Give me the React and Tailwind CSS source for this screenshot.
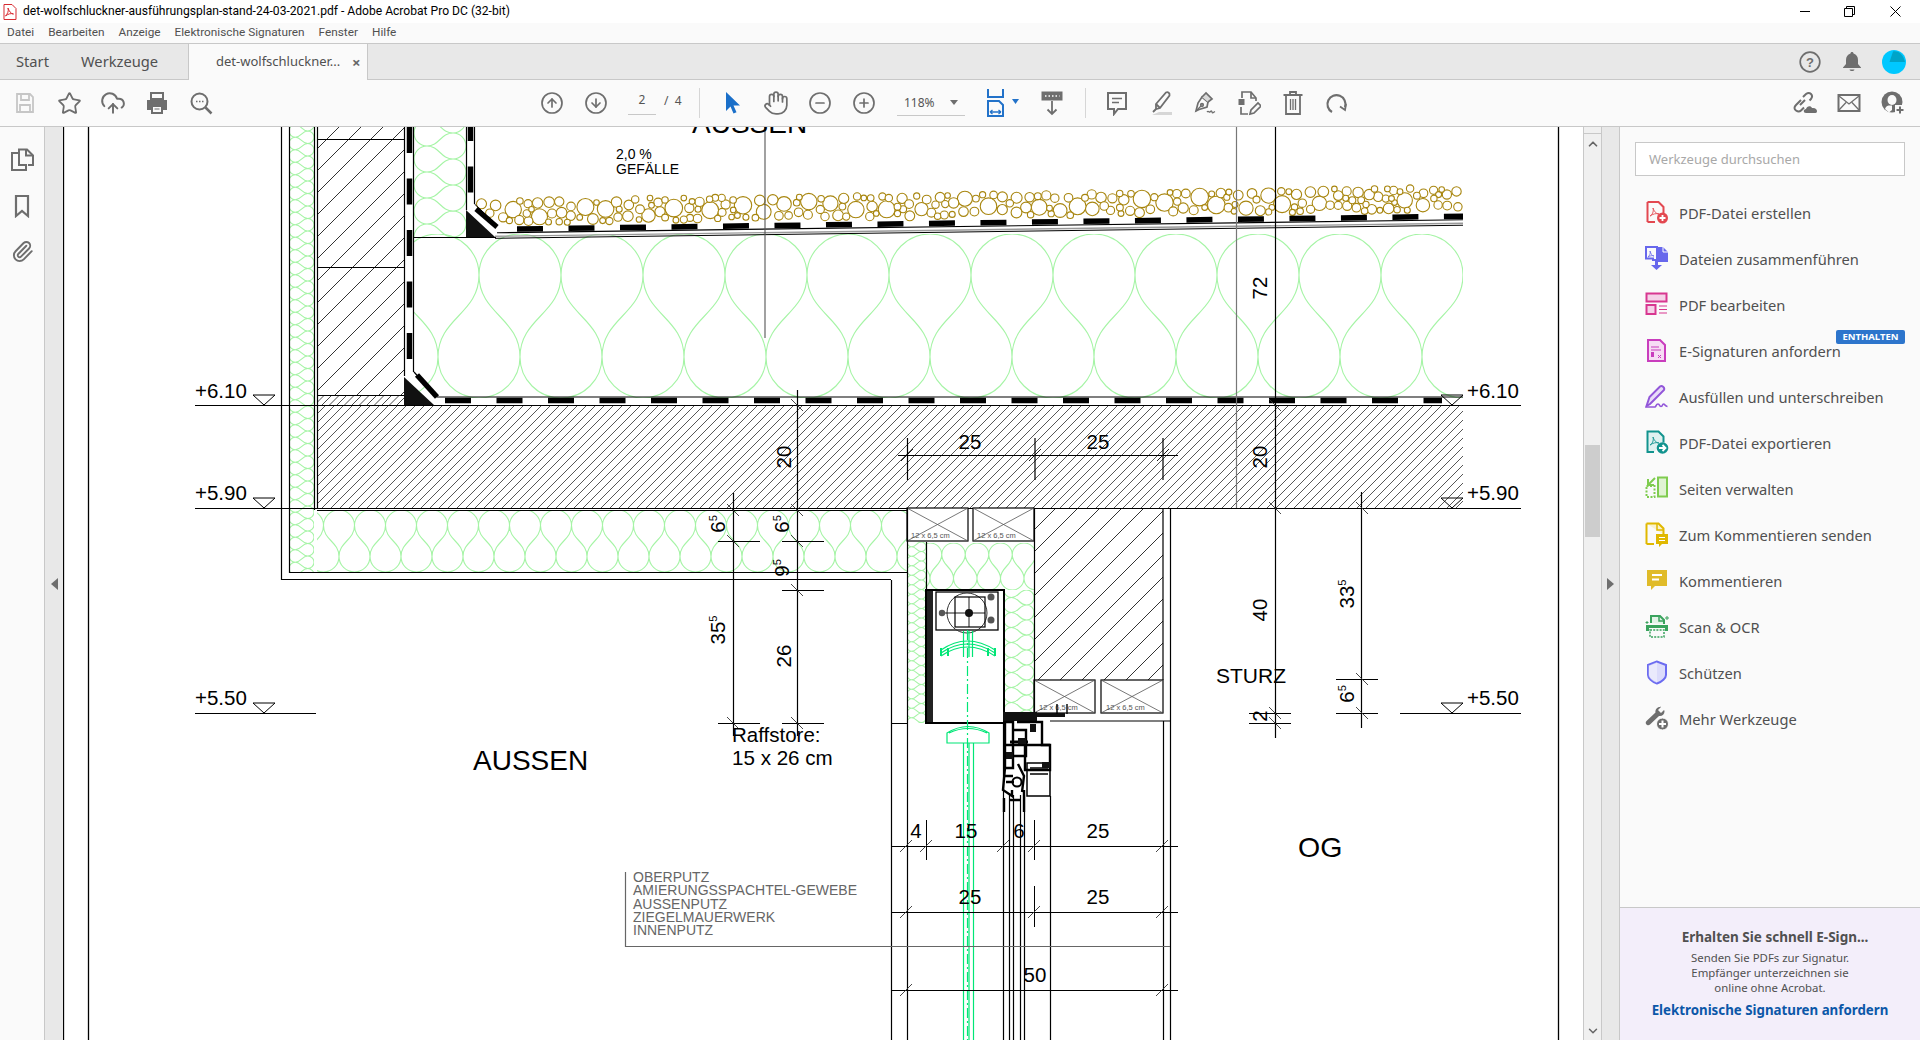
import {
  Star,
  CloudUpload,
  CircleArrowUp,
  CircleArrowDown,
  CircleMinus,
  CirclePlus,
  Hand,
  Paperclip,
  ChevronUp,
  ChevronDown,
} from "lucide-react";

// ---------- toolbar icons ----------
const G = "#6e6e6e";

const SaveIcon = () => (
  <svg width="24" height="24" viewBox="0 0 24 24" fill="none" stroke="#c6c6c6" strokeWidth="1.8">
    <path d="M4 3h13l3 3v15H4z" />
    <path d="M8 3v6h8V3" />
    <path d="M7 21v-7h10v7" />
  </svg>
);
const PrintIcon = () => (
  <svg width="24" height="24" viewBox="0 0 24 24">
    <path d="M6 2h12v6H6z" fill="none" stroke={G} strokeWidth="2" />
    <path d="M2 9h20v10h-4v-5H6v5H2z" fill={G} />
    <path d="M7 15h10v7H7z" fill="none" stroke={G} strokeWidth="2" />
    <path d="M9.500 18h5" stroke={G} />
  </svg>
);
const FindIcon = () => (
  <svg width="24" height="24" viewBox="0 0 24 24" fill="none" stroke={G} strokeWidth="2">
    <circle cx="10.500" cy="10.500" r="8" />
    <path d="M16.500 16.500l6 6" strokeWidth="2.500" />
    <path d="M7 10.500h1.500M10 10.500h1.500M13 10.500h1.500" strokeWidth="1.500" />
  </svg>
);
const PointerIcon = () => (
  <svg width="24" height="24" viewBox="0 0 24 24">
    <path d="M6 1v19l4.500-4.500 3 7 3-1.300-3-6.700H20z" fill="#1a6fc9" />
  </svg>
);
const FitIcon = () => (
  <svg width="24" height="30" viewBox="0 0 24 30" fill="none" stroke="#2272c9" strokeWidth="2">
    <path d="M4 1v8h15V1" />
    <path d="M4 28V13h11l4 4v11z" />
    <path d="M6 24h11M6 24l2.500-2M6 24l2.500 2M17 24l-2.500-2M17 24l-2.500 2" strokeWidth="1.300" />
  </svg>
);
const ScrollIcon = () => (
  <svg width="24" height="26" viewBox="0 0 24 26" fill="none" stroke={G}>
    <rect x="2" y="2" width="20" height="8" fill={G} />
    <path d="M5 6h1.500M8.500 6H10M12 6h1.500M15.500 6H17M19 6h.5" stroke="#fff" strokeWidth="1.500" />
    <path d="M12 11v13M7.500 19.500l4.500 4.500 4.500-4.500" strokeWidth="1.800" />
  </svg>
);
const CommentIcon = () => (
  <svg width="24" height="26" viewBox="0 0 24 26" fill="none" stroke={G} strokeWidth="2">
    <path d="M3 3h18v16h-8l-4 5v-5H3z" />
    <path d="M7 8.500h10M7 12.500h7" strokeWidth="1.500" />
  </svg>
);
const HighlightIcon = () => (
  <svg width="24" height="26" viewBox="0 0 24 26" fill="none" stroke={G} strokeWidth="1.800">
    <path d="M7 14L17 2.500c2-1 4 .8 3.500 3L11 18l-4 1z" />
    <path d="M7 14l4 4M4 22l3-3" />
    <path d="M10 22h13v3H3z" fill="#d6d6d6" stroke="none" />
  </svg>
);
const SignIcon = () => (
  <svg width="24" height="26" viewBox="0 0 24 26" fill="none" stroke={G} strokeWidth="1.700">
    <path d="M9 7l6 5-1 5-8 2.500L3 21l2-8z" />
    <path d="M9 7l4-4 6 6-4 3" fill="#d9d9d9" stroke={G} />
    <path d="M3 21l5-5" strokeWidth="1.200" />
    <circle cx="9" cy="15" r="1.300" />
    <path d="M14 22c1.500-2 2 1 3 0s1.500-2 2 0 2 0 3-.5" strokeWidth="1.300" />
  </svg>
);
const EditIcon = () => (
  <svg width="24" height="26" viewBox="0 0 24 26" fill="none" stroke={G} strokeWidth="1.700">
    <path d="M5 8V2h9l5 6v3" />
    <path d="M14 2v6h5" />
    <rect x="1.500" y="9" width="6" height="6" fill={G} stroke="none" />
    <path d="M4 17v7h7" />
    <path d="M13 24l1-4 7-7 3 3-7 7z" />
  </svg>
);
const TrashIcon = () => (
  <svg width="24" height="26" viewBox="0 0 24 26" fill="none" stroke={G} strokeWidth="1.800">
    <path d="M2.500 5h19M9 5V2h6v3" />
    <path d="M5 5v19h14V5" />
    <path d="M9.500 9v11M12 9v11M14.500 9v11" strokeWidth="1.300" />
  </svg>
);
const RotateIcon = () => (
  <svg width="24" height="24" viewBox="0 0 24 24" fill="none" stroke={G} strokeWidth="2.200">
    <path d="M7 21A9 9 0 1 1 20 16" />
    <path d="M15 15.500l5 3.500 1-6" strokeWidth="1.800" />
  </svg>
);
const LinkCloudIcon = () => (
  <svg width="26" height="24" viewBox="0 0 26 24" fill="none" stroke={G} strokeWidth="2">
    <path d="M9 9L4 14c-2 2-2 4 0 5.500s3.500 1.500 5 0l3-3" />
    <path d="M8 14l5-5M11 6l3-3c2-1.500 3.500-1.500 5 0s1.500 3 0 5l-1.500 1.500" />
    <path d="M14 22c-3 0-3-4 0-4 .5-3 5-4 6-1 3-.5 5 1 5 3 0 1-.5 2-1.500 2z" fill={G} stroke="none" />
  </svg>
);
const MailIcon = () => (
  <svg width="24" height="20" viewBox="0 0 24 20" fill="none" stroke={G} strokeWidth="2">
    <rect x="1.500" y="2" width="21" height="16" />
    <path d="M2 3l10 8 10-8M2 17l7-7.500M22 17l-7-7.500" strokeWidth="1.300" />
  </svg>
);
const UserAddIcon = () => (
  <svg width="24" height="24" viewBox="0 0 24 24">
    <circle cx="11" cy="11" r="10.500" fill={G} />
    <ellipse cx="11" cy="9" rx="4.500" ry="5" fill="#fafafa" />
    <path d="M4 18c1.500-4 4-3.500 7-3.500v4.500l-3 2.500z" fill="#fafafa" />
    <rect x="14" y="14" width="10" height="10" fill="#fafafa" />
    <path d="M19 15.500v7M15.500 19h7" stroke={G} strokeWidth="2" />
  </svg>
);
const HelpIcon = () => (
  <svg width="22" height="22" viewBox="0 0 22 22" fill="none">
    <circle cx="11" cy="11" r="9.800" stroke={G} strokeWidth="1.700" />
    <text x="11" y="15.500" textAnchor="middle" fontSize="13" fontWeight="700" fill={G} fontFamily="Liberation Sans, sans-serif">?</text>
  </svg>
);
const BellIcon = () => (
  <svg width="18" height="20" viewBox="0 0 18 20">
    <path d="M9 0c1 0 1.500.7 1.500 1.600C13.500 2.400 15 5 15 8v4l3 3.500V16H0v-.5L3 12V8c0-3 1.500-5.600 4.500-6.400C7.500.7 8 0 9 0z" fill={G} />
    <path d="M6.500 17.500h5C11 19.500 7 19.500 6.500 17.500z" fill={G} />
  </svg>
);
const Avatar = () => (
  <svg width="24" height="24" viewBox="0 0 24 24">
    <circle cx="12" cy="12" r="12" fill="#00c8ff" />
    <path d="M11 1.500C15 .5 21 3 23 12H7.500z" fill="#00a4c8" />
  </svg>
);

// ---------- tool panel icons ----------
const red = "#e34850";
const PanelIcons = {
  create: (
    <>
      <path d="M2.500 2h11l5 5v6M10 22H2.500z" fill="none" stroke={red} strokeWidth="2" />
      <path d="M2.500 2v20" stroke={red} strokeWidth="2" />
      <path d="M8 8c1 4-1 7-3 8 3-2 6-3 9-2-3 0-5-3-6-6z" fill="none" stroke={red} strokeWidth=".9" />
      <circle cx="17.500" cy="18" r="5.500" fill={red} />
      <path d="M17.500 15v6M14.500 18h6" stroke="#fff" strokeWidth="1.800" />
    </>
  ),
  merge: (
    <>
      <path d="M1 1h11v13H8v-1.500H1z" fill="none" stroke="#6767ec" strokeWidth="2" />
      <path d="M13 1h5l5 5v10H13z" fill="#6767ec" />
      <path d="M18 1v5h5" fill="none" stroke="#fff" />
      <path d="M5 5c1 3-1 5-2 6 2-1 4-2 6-1-2 0-3-2-4-5z" fill="none" stroke="#6767ec" strokeWidth=".8" />
      <path d="M13 15v4h4l-5.500 5L6 19h4v-4z" fill="#6767ec" />
    </>
  ),
  edit: (
    <>
      <rect x="1.500" y="1.500" width="20" height="8" fill="#f5d2e8" stroke="#d83790" strokeWidth="2" />
      <rect x="1.500" y="13" width="9" height="9" fill="#f5d2e8" stroke="#d83790" strokeWidth="2" />
      <path d="M14 14h8M14 17.500h8M14 21h8" stroke="#d83790" strokeWidth="1.200" />
    </>
  ),
  sign: (
    <>
      <path d="M3 2h12l5 5v16H3z" fill="#f6dcf4" stroke="#c93dbd" strokeWidth="2" />
      <path d="M6 9h8M6 12h10" stroke="#c93dbd" />
      <rect x="6" y="14" width="3" height="5" fill="#c93dbd" />
      <path d="M13 17l3 3M16 17l-3 3" stroke="#c93dbd" />
    </>
  ),
  fill: (
    <>
      <path d="M1.500 22l3-9L15 2.500c2-1.500 5 1 4 3.500L8 17l-3 3z" fill="#e8dcf8" stroke="#9256d9" strokeWidth="2" />
      <path d="M1 23h9c1 0 1-3 3-3s1 2.500 3 2.500 1-2.500 2.500-2.500 1.500 2.500 4 2.500" fill="none" stroke="#9256d9" strokeWidth="1.700" />
    </>
  ),
  export: (
    <>
      <path d="M9 22H2.500V1.500h11l5 5v6" fill="#e0f1f0" stroke="#12938e" strokeWidth="2" />
      <path d="M8 7c1 4-1 7-3 8 3-2 6-3 9-2-3 0-5-3-6-6z" fill="none" stroke="#12938e" strokeWidth=".9" />
      <circle cx="17.500" cy="18" r="5.800" fill="#12938e" />
      <path d="M14 18h6M17.500 15l3 3-3 3" fill="none" stroke="#fff" strokeWidth="1.800" />
    </>
  ),
  pages: (
    <>
      <rect x="13" y="1.500" width="9" height="19" fill="#e0f3d3" stroke="#7fcc4f" strokeWidth="2" />
      <path d="M1.500 10h8v11h-8z" fill="none" stroke="#7fcc4f" strokeWidth="2" strokeDasharray="2 1.500" />
      <path d="M10 2L3.500 8.500M3 3v6h6" fill="none" stroke="#7fcc4f" strokeWidth="2" />
    </>
  ),
  send: (
    <>
      <path d="M1.500 1.500h12l5 5v6M9 22H1.500z" fill="#faf2cc" stroke="#e0b800" strokeWidth="2" />
      <path d="M1.500 1.500v20.500" stroke="#e0b800" strokeWidth="2" />
      <path d="M12 2v6h6" fill="none" stroke="#e0b800" strokeWidth="1.500" />
      <path d="M11 12h12v10h-6l-3 3v-3h-3z" fill="#e0b800" />
      <path d="M14 15.500h6M14 18.500h6" stroke="#fff" />
    </>
  ),
  comment: (
    <>
      <path d="M2 2h20v16H10l-4 4v-4H2z" fill="#e0bb29" />
      <path d="M7 7h10M7 11.500h7" stroke="#fff" strokeWidth="2" />
    </>
  ),
  scan: (
    <>
      <path d="M6 9V2h9l4 4v4" fill="#e2f3e7" stroke="#3aa35d" strokeWidth="2" />
      <path d="M14 2v5h5" fill="none" stroke="#3aa35d" strokeWidth="1.500" />
      <path d="M1 11h22v6h-3v-3H4v3H1z" fill="#3aa35d" />
      <rect x="5" y="16" width="14" height="7" fill="none" stroke="#3aa35d" strokeWidth="1.500" strokeDasharray="2 1.200" />
      <path d="M22 2v4M20 4h4M2 7v3M.5 8.500h3" stroke="#3aa35d" strokeWidth="1" />
    </>
  ),
  shield: (
    <>
      <path d="M12 1.500L3 5v10c0 3 4 7 9 8.500 5-1.500 9-5.500 9-8.500V5z" fill="#dcdcfb" stroke="#6b6bf0" strokeWidth="2" />
      <path d="M3.500 5.500L12 2v21C7 21.500 4 18 3.500 15z" fill="#fff" opacity=".4" />
    </>
  ),
  more: (
    <>
      <path d="M15 1c-3 0-5 2.500-4.500 5.500L1.500 15c-1.500 1.500-.5 3 0 3.500s2 1.500 3.500 0L14 10c3 .5 5.500-1.500 5.500-4.500 0-.5 0-1-.5-1.500l-3 3-3-3 3-3c-.5-.3-.5 0-1-.5z" fill={G} />
      <circle cx="17.500" cy="18" r="6" fill={G} stroke="#fafafa" />
      <path d="M17.500 14.500v7M14 18h7" stroke="#fff" strokeWidth="2" />
    </>
  ),
};

const tools = [
  ["create", "PDF-Datei erstellen"],
  ["merge", "Dateien zusammenführen"],
  ["edit", "PDF bearbeiten"],
  ["sign", "E-Signaturen anfordern", true],
  ["fill", "Ausfüllen und unterschreiben"],
  ["export", "PDF-Datei exportieren"],
  ["pages", "Seiten verwalten"],
  ["send", "Zum Kommentieren senden"],
  ["comment", "Kommentieren"],
  ["scan", "Scan & OCR"],
  ["shield", "Schützen"],
  ["more", "Mehr Werkzeuge"],
];

// ---------- drawing helpers ----------
const GREEN = "#a6f4a6";

function wavePath(len, thick, phase) {
  const r = thick / 4;
  const yt = r;
  const yb = thick - r;
  const c = r * 0.95;
  let d = "";
  for (let xb = phase - 4 * r; xb < len + 4 * r; xb += 2 * r) {
    d += `M${xb} ${yb}A${r} ${r} 0 0 0 ${xb + 2 * r} ${yb}`;
    d += `M${xb + r} ${yt}A${r} ${r} 0 0 1 ${xb + 3 * r} ${yt}`;
    d += `M${xb} ${yb}C${xb} ${yb - c} ${xb + r} ${yt + c} ${xb + r} ${yt}`;
    d += `M${xb} ${yb}C${xb} ${yb - c} ${xb - r} ${yt + c} ${xb - r} ${yt}`;
  }
  return d;
}

function Insulation({ id, x, y, w, h, vertical, phase = 0, width = 1.100 }) {
  const len = vertical ? h : w;
  const thick = vertical ? w : h;
  const tr = vertical ? `matrix(0 1 1 0 ${x} ${y})` : `translate(${x} ${y})`;
  return (
    <g clipPath={`url(#${id})`}>
      <clipPath id={id}>
        <rect x={x} y={y} width={w} height={h} />
      </clipPath>
      <path d={wavePath(len, thick, phase)} transform={tr} fill="none" stroke={GREEN} strokeWidth={width} />
    </g>
  );
}

function Hatch({ id, x, y, w, h, step, color = "#555", width = 0.9 }) {
  const lines = [];
  for (let i = -h; i < w; i += step) {
    lines.push(`M${x + i} ${y + h}L${x + i + h} ${y}`);
  }
  return (
    <g clipPath={`url(#${id})`}>
      <clipPath id={id}>
        <rect x={x} y={y} width={w} height={h} />
      </clipPath>
      <path d={lines.join("")} stroke={color} strokeWidth={width} fill="none" />
    </g>
  );
}

const L = ({ d, c = "#000", w = 1.2, ...rest }) => <path d={d} stroke={c} strokeWidth={w} fill="none" {...rest} />;

const T = ({ x, y, s = 20.500, rot, c = "#000", a = "start", children, ...rest }) => (
  <text
    x={x}
    y={y}
    fontSize={s}
    fill={c}
    textAnchor={a}
    transform={rot ? `rotate(-90 ${x} ${y})` : undefined}
    {...rest}
  >
    {children}
  </text>
);

// rotated dimension with small superscript 5
const Dim5 = ({ x, y, v }) => (
  <T x={x} y={y} rot a="middle">
    {v}
    <tspan fontSize="11" dy="-8">5</tspan>
  </T>
);

const tickH = (x, y) => `M${x - 6} ${y + 6}L${x + 6} ${y - 6}`;
const tickV = (x, y) => `M${x - 6} ${y - 6}L${x + 6} ${y + 6}`;

const slopeY = (x) => 229 - (x - 517) * 0.0135;

// loose packing of gravel stones along the slope, no stone sits on top of another
function gravelCircles() {
  let seed = 4711;
  const rnd = () => {
    seed = (seed * 16807) % 2147483647;
    return seed / 2147483647;
  };
  const stones = [];
  const tryPlace = (rMin, rMax, tries) => {
    for (let i = 0; i < tries; i++) {
      const x = 477 + rnd() * 981;
      const r = rMin + rnd() * (rMax - rMin);
      // left end of the bed follows the diagonal corner of the membrane
      const bottom = Math.min(slopeY(x) - 3, 207 + (x - 477) * 0.85);
      const band = bottom - 196 + (x - 477) * 0.013 < 29 ? Math.max(bottom - 196, 8) : 29;
      if (band < 2 * r) continue;
      const y = bottom - r - rnd() * (band - 2 * r);
      const clash = stones.some((s) => Math.hypot(s.x - x, s.y - y) < s.r + r - 0.800);
      if (!clash) stones.push({ x, y, r });
    }
  };
  tryPlace(6.500, 9, 60);
  tryPlace(4, 5.500, 1100);
  tryPlace(2.800, 3.800, 3000);
  return stones.map((s, i) => (
    <circle key={i} cx={s.x.toFixed(1)} cy={s.y.toFixed(1)} r={s.r.toFixed(1)} />
  ));
}

function Level({ x, y, tx, dy = 8, label }) {
  return (
    <g>
      <T x={tx} y={y - dy}>{label}</T>
      <path d={`M${x} ${y - 10}h22l-11 10z`} fill="none" stroke="#000" strokeWidth="1" />
    </g>
  );
}

function SmallBox({ x, y, w, h, tx, ty }) {
  return (
    <g>
      <rect x={x} y={y} width={w} height={h} fill="#fff" stroke="#000" strokeWidth="1.200" />
      <L d={`M${x} ${y}L${x + w} ${y + h}M${x + w} ${y}L${x} ${y + h}`} c="#555" w=".8" />
      <T x={tx} y={ty} s={7.500} c="#555">12 x 6,5 cm</T>
    </g>
  );
}

function Drawing() {
  const dash = "26 25.500";
  return (
    <svg
      width="1520"
      height="913"
      viewBox="63 127 1520 913"
      className="block bg-white font-['Liberation_Sans',sans-serif]"
    >
      {/* page borders */}
      <L d="M63.500 127V1040M88.500 127V1040M1558.500 127V1040" w="1.300" />

      {/* outer insulation strips */}
      <Insulation id="c1" x={289} y={127} w={25} h={445} vertical phase={4} />
      <Insulation id="c2" x={414} y={127} w={52} h={110} vertical phase={6} />
      <Insulation id="c3" x={317} y={510} w={590} h={62} phase={-9} />
      <Insulation id="c4" x={907} y={542} w={19} h={181} vertical phase={0} />
      <Insulation id="c5" x={927} y={543} w={107} h={47} phase={3} />
      <Insulation id="c6" x={1004} y={590} w={30} h={122} vertical phase={0} />

      {/* main roof insulation */}
      <g clipPath="url(#roof)">
        <clipPath id="roof">
          <rect x={414} y={234} width={1049} height={164} />
        </clipPath>
        <path d={wavePath(1200, 164, 0)} transform="translate(356 234)" fill="none" stroke={GREEN} strokeWidth="1.100" />
      </g>

      {/* brick walls */}
      <Hatch id="h1" x={317} y={127} w={88} h={268} step={22} color="#333" width="1" />
      <Hatch id="h2" x={317} y={395} w={88} h={10} step={7.500} color="#333" />
      <Hatch id="h3" x={1034} y={508} w={129} h={172} step={22} color="#333" width="1" />

      {/* concrete slab */}
      <Hatch id="h4" x={317} y={405} w={1146} h={103} step={9} color="#444" width=".9" />

      {/* wall outlines */}
      <L d="M281.500 127V579.500H891M289.500 127V572.500H907M314.500 127V510M317.500 127V508" />
      <L d="M317 139.500H405M317 267.500H405M317 395.500H405" />
      <L d="M195 405.500H1521M195 508.500H1521M195 713.500H316M1400 713.500H1521" />
      <L d="M317 510.500H907" />

      {/* membrane vertical */}
      <L d="M404.500 127V376M413.500 127V372" />
      <L d="M409.500 127V376" w="5.500" strokeDasharray={dash} />
      <path d="M404 377V405H434z" fill="#111" />
      <L d="M414 372L437 397H1463" />
      <L d="M417 375L437 397" w="5.500" />
      <L d="M437 400.500H1442" w="5.500" strokeDasharray={dash} strokeDashoffset="-8" />

      {/* upper parapet membrane */}
      <L d="M466.500 127V210M474.500 127V204" />
      <L d="M470.500 127V208" w="5.500" strokeDasharray={dash} strokeDashoffset="12" />
      <path d="M466 210V237H495z" fill="#111" />
      <L d="M413 237.500H496" />

      {/* gravel */}
      <g fill="#fff" stroke="#a8860f" strokeWidth="1.100">{gravelCircles()}</g>

      <L d="M476 209L497 227" w="5" />
      <L d="M474.500 204L497 225" w="1" />

      {/* sloped membrane */}
      <L d={`M517 ${slopeY(517)}L1463 ${slopeY(1463)}`} w="5.500" strokeDasharray={dash} />
      <L d={`M497 ${slopeY(497) + 3.500}L1463 ${slopeY(1463) + 3.500}`} w="1.200" />
      <L d={`M495 ${slopeY(495) + 7}L1463 ${slopeY(1463) + 7}`} c="#999" w="1.400" />
      <L d={`M495 ${slopeY(495) + 9}L1463 ${slopeY(1463) + 9}`} w="1" />

      {/* soffit boxes */}
      <SmallBox x={907} y={508} w={61} h={33} tx={911} ty={538} />
      <SmallBox x={973} y={508} w={61} h={33} tx={977} ty={538} />
      <SmallBox x={1034} y={680} w={61} h={33} tx={1039} ty={710} />
      <SmallBox x={1101} y={680} w={62} h={33} tx={1106} ty={710} />
      <L d="M926.500 542V590M1034.500 508V712M1163 508V680M1170.500 508V1040" />
      <L d="M907.500 508V1040M891.500 580V1040" />
      <L d="M1050 721H1170M1163.500 721V1040" />

      {/* blind box */}
      <rect x="926" y="590" width="7" height="133" fill="#222" />
      <rect x="926" y="590" width="78" height="133" fill="none" stroke="#000" strokeWidth="2" />
      <rect x="936" y="592" width="62" height="38" fill="#fff" stroke="#000" strokeWidth="1.300" />
      <circle cx="967" cy="613" r="20" fill="none" stroke="#333" />
      <rect x="955" y="597" width="30" height="30" fill="none" stroke="#000" strokeWidth="1.200" />
      <L d="M941 613H985M969 597V627" w=".9" />
      <circle cx="969" cy="613" r="4" fill="#111" />
      <circle cx="942" cy="613" r="3.200" fill="#555" />
      <circle cx="991" cy="597" r="3.500" fill="#555" />
      <circle cx="991" cy="620" r="3.500" fill="#555" />
      <g stroke="#00e676" fill="none" strokeWidth="1.200">
        <path d="M963.500 631V657M969 631V657M972.500 631V657" />
        <path d="M941 650Q967 632 995 650M941 653Q967 635 995 653M941 656Q967 638 995 656" />
        <path d="M941 648v8M948 648v8M988 648v8M995 648v8" strokeWidth="2" />
        <path d="M947 743V733Q968 720 989 733V743zM949 733Q968 724 987 733" />
        <path d="M963.500 743V1040M969 743V1040M973.500 743V1040" />
        <path d="M967.500 630V1040" strokeDasharray="10 3 2 3" />
      </g>

      {/* window profile */}
      <rect x="1003" y="712" width="34" height="9" fill="#111" />
      <rect x="1037" y="713" width="28" height="4" fill="#111" />
      <L d="M1057 704V714M1067 704V714" w="1.400" />
      <g fill="none" stroke="#000" strokeWidth="2.400">
        <path d="M1005 722V768H1013V722zM1013 730H1026V756H1013z" />
        <path d="M1017 722H1042V745H1050V770H1025V745" />
        <path d="M1005 745H1050M1005 768L1003 790L1012 796V790M1018 764L1024 776L1022 792" />
        <path d="M1027 763H1050V796H1027z" strokeWidth="1.500" />
        <path d="M1010 742H1028" strokeWidth="3" />
        <path d="M1030 768H1048M1030 774H1048" strokeWidth="1.500" />
        <path d="M1004 776H1013M1006 782H1014M1004 798V812M1024 790V812M1010 800H1020" />
      </g>
      <rect x="1030" y="724" width="6" height="8" fill="#111" />
      <rect x="1006" y="752" width="7" height="7" fill="#111" />
      <rect x="1018" y="738" width="8" height="6" fill="#111" />
      <rect x="1042" y="762" width="8" height="6" fill="#111" />
      <circle cx="1017" cy="782" r="4.500" fill="none" stroke="#000" strokeWidth="2" />
      <L d="M1003.500 722V1040M1009.500 795V1040M1013.500 795V1040M1020.500 795V1040M1024.500 795V1040M1050.500 796V1040" w="1.200" />

      {/* dims: horizontal */}
      <L d="M898 455.500H1178M907.500 438V480M1035 438V480M1163 438V480" />
      <L d={tickH(907, 455) + tickH(1035, 455) + tickH(1163, 455)} w=".9" />
      <L d="M891 846.500H1178M891 912.500H1178M891 990.500H1178" />
      <L d="M926.500 820V860M1034.500 820V860M1034.500 886V927" w="1" />
      <L d={[tickH(906, 846), tickH(926, 846), tickH(1003, 846), tickH(1034, 846), tickH(1162, 846), tickH(906, 912), tickH(1034, 912), tickH(1162, 912), tickH(906, 990), tickH(1162, 990)].join("")} c="#333" w=".9" />
      <L d="M625.500 872V946.500H1170" c="#666" w="1.200" />

      {/* dims: vertical */}
      <L d="M733.500 493V736M797.500 390V736" />
      <L d="M718 541.500H760M782 541.500H824M782 590.500H824M718 723.500H760M782 723.500H824M891 723.500H907" />
      <L d={[tickV(733, 510), tickV(797, 405), tickV(797, 510), tickV(733, 541), tickV(797, 541), tickV(797, 590), tickV(733, 723), tickV(797, 723)].join("")} c="#333" w=".9" />

      <L d="M1275.500 127V738" c="#000" />
      <L d="M1236.500 127V508" c="#777" />
      <L d="M1361.500 492V728M1336 679.500H1378M1336 713.500H1378M1249 713.500H1291M1249 723.500H1291" />
      <L d={[tickV(1275, 405), tickV(1275, 508), tickV(1275, 713), tickV(1275, 723), tickV(1362, 508), tickV(1362, 679), tickV(1362, 713)].join("")} c="#333" w=".9" />
      <L d="M765 127V338" c="#555" w="1.100" />

      {/* labels */}
      <T x={692} y={133} s={28}>AUSSEN</T>
      <T x={473} y={770} s={28}>AUSSEN</T>
      <T x={616} y={159} s={14}>2,0 %</T>
      <T x={616} y={174} s={14}>GEFÄLLE</T>
      <T x={732} y={742} s={20.500}>Raffstore:</T>
      <T x={732} y={765} s={20.600}>15 x 26 cm</T>
      <T x={1216} y={683} s={21}>STURZ</T>
      <T x={1298} y={857} s={28.500}>OG</T>

      <T x={195} y={398}>+6.10</T>
      <T x={195} y={500}>+5.90</T>
      <T x={195} y={705}>+5.50</T>
      <path d="M253 395h22l-11 10zM253 498h22l-11 10zM253 703h22l-11 10z" fill="none" stroke="#000" />
      <Level x={1441} y={405} tx={1467} dy={7} label="+6.10" />
      <Level x={1441} y={508} tx={1467} label="+5.90" />
      <Level x={1441} y={713} tx={1467} label="+5.50" />

      <T x={970} y={449} a="middle">25</T>
      <T x={1098} y={449} a="middle">25</T>
      <T x={916} y={838} a="middle">4</T>
      <T x={966} y={838} a="middle">15</T>
      <T x={1019} y={838} a="middle">6</T>
      <T x={1098} y={838} a="middle">25</T>
      <T x={970} y={904} a="middle">25</T>
      <T x={1098} y={904} a="middle">25</T>
      <T x={1035} y={982} a="middle">50</T>

      <T x={791} y={457} rot a="middle">20</T>
      <T x={1267} y={457} rot a="middle">20</T>
      <T x={1267} y={288} rot a="middle">72</T>
      <T x={1267} y={610} rot a="middle">40</T>
      <T x={1267} y={716} rot a="middle">2</T>
      <T x={791} y={656} rot a="middle">26</T>
      <Dim5 x={725} y={524} v="6" />
      <Dim5 x={789} y={524} v="6" />
      <Dim5 x={789} y={568} v="9" />
      <Dim5 x={725} y={630} v="35" />
      <Dim5 x={1354} y={594} v="33" />
      <Dim5 x={1354} y={694} v="6" />

      <g fontSize="14" fill="#666">
        <text x="633" y="882">OBERPUTZ</text>
        <text x="633" y="895" textLength="224">AMIERUNGSSPACHTEL-GEWEBE</text>
        <text x="633" y="909">AUSSENPUTZ</text>
        <text x="633" y="922">ZIEGELMAUERWERK</text>
        <text x="633" y="935">INNENPUTZ</text>
      </g>
    </svg>
  );
}

const Btn = ({ children, className = "" }) => (
  <div className={`w-[44px] h-[46px] shrink-0 flex items-center justify-center ${className}`}>{children}</div>
);

export default function App() {
  return (
    <div className="w-[1920px] h-[1040px] flex flex-col overflow-hidden bg-white font-['Noto_Sans',sans-serif] text-[#4b4b4b]">
      {/* title bar */}
      <div className="h-[23px] shrink-0 bg-white flex items-center text-[12.100px] text-black">
        <svg width="14" height="16" viewBox="0 0 14 16" className="ml-[3px] mr-[6px]">
          <path d="M1 .500h8l4 4v11H1z" fill="#fff" stroke="#d7282f" />
          <path d="M5 4c1 3-.5 6-2.500 8 2.500-2 5.500-3 8-2-2.500 0-4.500-3-5.500-6z" fill="none" stroke="#d7282f" />
        </svg>
        <span className="w-[1760px] truncate font-['Roboto',sans-serif]">det-wolfschluckner-ausführungsplan-stand-24-03-2021.pdf - Adobe Acrobat Pro DC (32-bit)</span>
        <div className="ml-auto flex items-center">
          <div className="w-[45px] h-[23px] flex items-center justify-center">
            <div className="w-[10px] h-px bg-black" />
          </div>
          <div className="w-[45px] h-[23px] flex items-center justify-center">
            <svg width="11" height="11" viewBox="0 0 11 11" fill="none" stroke="#000"><path d="M.500 2.500h8v8h-8zM2.500 2.500v-2h8v8h-2" /></svg>
          </div>
          <div className="w-[48px] h-[23px] flex items-center justify-center pr-[2px]">
            <svg width="11" height="11" viewBox="0 0 11 11" stroke="#000"><path d="M.500.500l10 10M10.500.500l-10 10" /></svg>
          </div>
        </div>
      </div>

      {/* menu bar */}
      <div className="h-[20px] shrink-0 bg-[#fafafa] flex items-center gap-[14px] pl-[7px] text-[11.800px] text-[#505050] font-['Roboto',sans-serif]">
        <span>Datei</span>
        <span>Bearbeiten</span>
        <span>Anzeige</span>
        <span>Elektronische Signaturen</span>
        <span>Fenster</span>
        <span>Hilfe</span>
      </div>

      {/* tab bar */}
      <div className="h-[37px] shrink-0 bg-[#e8e8e8] border-y border-[#c8c8c8] flex items-stretch text-[#505050]">
        <span className="w-[65px] ml-[16px] self-center text-[14.700px]">Start</span>
        <span className="w-[107px] self-center text-[14.700px]">Werkzeuge</span>
        <div className="w-[180px] -mb-px bg-[#fafafa] border-x border-[#c8c8c8] flex items-center pl-[27px] text-[13px]">
          <span className="w-[131px] whitespace-nowrap">det-wolfschluckner...</span>
          <span className="ml-[5px] text-[15px] font-bold text-[#666] leading-none">×</span>
        </div>
        <div className="ml-auto flex items-center">
          <div className="w-[44px] flex justify-center ml-[1px]"><HelpIcon /></div>
          <div className="w-[40px] flex justify-center"><BellIcon /></div>
          <div className="w-[44px] flex justify-center mr-[4px]"><Avatar /></div>
        </div>
      </div>

      {/* toolbar */}
      <div className="h-[47px] shrink-0 bg-[#fafafa] border-b border-[#c8c8c8] flex items-center pl-[3px]">
        <Btn><SaveIcon /></Btn>
        <Btn><Star size={25} color={G} strokeWidth={1.700} /></Btn>
        <Btn><CloudUpload size={26} color={G} strokeWidth={1.800} /></Btn>
        <Btn><PrintIcon /></Btn>
        <Btn><FindIcon /></Btn>

        <Btn className="ml-[307px]"><CircleArrowUp size={24} color={G} strokeWidth={1.700} /></Btn>
        <Btn><CircleArrowDown size={24} color={G} strokeWidth={1.700} /></Btn>
        <div className="w-[81px] shrink-0 flex items-center text-[12px] text-[#555] pl-[10px]">
          <span className="w-[28px] pb-[5px] border-b border-[#c8c8c8] text-center">2</span>
          <span className="ml-[8px] pb-[5px]">/&nbsp;&nbsp;4</span>
        </div>
        <div className="w-px h-[30px] bg-[#d6d6d6] shrink-0" />
        <Btn className="ml-[10px]"><PointerIcon /></Btn>
        <Btn><Hand size={26} color={G} strokeWidth={1.600} /></Btn>
        <Btn><CircleMinus size={24} color={G} strokeWidth={1.700} /></Btn>
        <Btn><CirclePlus size={24} color={G} strokeWidth={1.700} /></Btn>
        <div className="w-[85px] h-[46px] shrink-0 flex items-center">
          <div className="ml-[11px] w-[68px] h-[26px] border-b border-[#c8c8c8] flex items-center pl-[7px] text-[12px] text-[#555]">
            118%
            <svg width="8" height="6" viewBox="0 0 8 6" className="ml-[15px]"><path d="M0 0h8L4 5z" fill={G} /></svg>
          </div>
        </div>
        <div className="w-[52px] h-[46px] shrink-0 flex items-center pl-[13px]">
          <FitIcon />
          <svg width="7" height="5" viewBox="0 0 7 5" className="ml-[4px] mb-[3px] shrink-0"><path d="M0 0h7L3.500 5z" fill="#2272c9" /></svg>
        </div>
        <Btn className="ml-[7px]"><ScrollIcon /></Btn>
        <div className="w-px h-[30px] bg-[#d6d6d6] shrink-0 ml-[11px]" />
        <Btn className="ml-[9px]"><CommentIcon /></Btn>
        <Btn><HighlightIcon /></Btn>
        <Btn><SignIcon /></Btn>
        <Btn><EditIcon /></Btn>
        <Btn><TrashIcon /></Btn>
        <Btn><RotateIcon /></Btn>

        <div className="ml-auto flex pr-[5px]">
          <Btn><LinkCloudIcon /></Btn>
          <Btn><MailIcon /></Btn>
          <Btn><UserAddIcon /></Btn>
        </div>
      </div>

      {/* main area */}
      <div className="flex-1 min-h-0 flex">
        <div className="w-[45px] shrink-0 bg-[#fafafa] border-r border-[#c8c8c8] flex flex-col items-center pt-[21px] gap-[22px]">
          <svg width="24" height="24" viewBox="0 0 24 24" fill="none" stroke={G} strokeWidth="2">
            <path d="M9 5V1.500h8l6 6V17h-5" />
            <path d="M16 1.500v6h6" />
            <path d="M9 5H2v17h14v-5H9z" />
          </svg>
          <svg width="18" height="24" viewBox="0 0 18 24" fill="none" stroke={G} strokeWidth="2.200">
            <path d="M3 2h12v20l-6-5-6 5z" />
          </svg>
          <Paperclip size={23} color={G} strokeWidth={2} />
        </div>
        <div className="w-[18px] shrink-0 bg-[#e8e8e8] flex items-center justify-center">
          <svg width="7" height="12" viewBox="0 0 7 12"><path d="M7 0v12L0 6z" fill={G} /></svg>
        </div>

        <Drawing />

        {/* scrollbar */}
        <div className="w-[19px] shrink-0 bg-[#f0f0f0] border-x border-[#c8c8c8] flex flex-col items-center">
          <div className="w-full h-[7px] border-b border-[#c8c8c8]" />
          <ChevronUp size={14} color="#666" strokeWidth={3} className="mt-[3px]" />
          <div className="w-[15px] h-[92px] bg-[#cdcdcd] mt-[294px]" />
          <ChevronDown size={14} color="#666" strokeWidth={2.500} className="mt-auto mb-[2px]" />
        </div>
        <div className="w-[18px] shrink-0 bg-[#e8e8e8] border-r border-[#c8c8c8] flex items-center justify-center">
          <svg width="7" height="12" viewBox="0 0 7 12"><path d="M0 0v12l7-6z" fill={G} /></svg>
        </div>

        {/* tools panel */}
        <div className="w-[300px] shrink-0 bg-[#fafafa] flex flex-col">
          <div className="mt-[15px] mx-[15px] h-[34px] bg-white border border-[#c8c8c8] flex items-center pl-[13px] pt-[2px] text-[13px] text-[#a8a8a8] shrink-0">
            Werkzeuge durchsuchen
          </div>
          <div className="mt-[14px] flex flex-col">
            {tools.map(([key, label, badge]) => (
              <div key={key} className="h-[46px] flex items-center pl-[25px] relative text-[14.700px] text-[#505050]">
                <svg width="24" height="26" viewBox="0 0 24 26" className="shrink-0">{PanelIcons[key]}</svg>
                <span className="ml-[10px]">{label}</span>
                {badge && (
                  <span className="absolute right-[15px] top-[2px] h-[14px] w-[69px] rounded-[2px] bg-[#2d75cc] text-white text-[9.500px] font-bold flex items-center justify-center leading-none">
                    ENTHALTEN
                  </span>
                )}
              </div>
            ))}
          </div>
          <div className="mt-auto h-[133px] shrink-0 bg-[#f3eefa] border-t border-[#c8c8c8] flex flex-col items-center pt-[20px] text-[#505050]">
            <div className="ml-[10px] text-[13.500px] font-bold leading-[18px]">Erhalten Sie schnell E-Sign...</div>
            <div className="mt-[4px] text-[11.400px] leading-[15px] text-center">
              Senden Sie PDFs zur Signatur.
              <br />
              Empfänger unterzeichnen sie
              <br />
              online ohne Acrobat.
            </div>
            <div className="mt-[6px] text-[13.300px] font-bold text-[#0b57a8] leading-[18px]">Elektronische Signaturen anfordern</div>
          </div>
        </div>
      </div>
    </div>
  );
}
